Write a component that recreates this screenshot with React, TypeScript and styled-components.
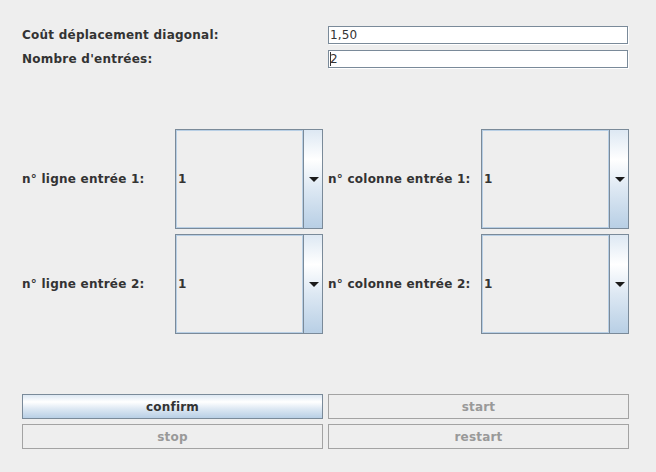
import React from "react";
import styled, { createGlobalStyle } from "styled-components";

const Global = createGlobalStyle`
  html, body { margin: 0; padding: 0; background: #eeeeee; }
  body { font-family: "DejaVu Sans", "Liberation Sans", sans-serif; }
`;

const ocean = "linear-gradient(to bottom, #dde8f3 0%, #ffffff 30%, #dde8f3 60%, #b8cfe5 100%)";

const Page = styled.div`
  width: 656px;
  height: 472px;
  box-sizing: border-box;
  padding: 26px 27px 0 22px;
  display: flex;
  flex-direction: column;
  background: #eeeeee;
  color: #333333;
  font-size: 12px;
`;

const FieldGrid = styled.div`
  display: grid;
  grid-template-columns: 306px 300px;
  row-gap: 6px;
  align-items: center;
`;

const Label = styled.label<{ $indent?: boolean }>`
  font-weight: bold;
  font-size: 12px;
  letter-spacing: 0.24px;
  color: #333333;
  white-space: nowrap;
  padding-left: ${(p) => (p.$indent ? "5px" : "0")};
`;

const TextField = styled.div`
  height: 18px;
  box-sizing: border-box;
  border: 1px solid #7a8a99;
  box-shadow: 1px 1px 0 #ffffff;
  background: #ffffff;
  display: flex;
  align-items: center;
  padding-left: 1px;
  font-size: 12px;
  letter-spacing: 0.1px;
  color: #333333;
`;

const Caret = styled.span`
  display: inline-block;
  width: 1px;
  height: 14px;
  background: #333333;
  margin-right: -1px;
`;

const ComboGrid = styled.div`
  margin-top: 61px;
  display: grid;
  grid-template-columns: 153px 148px 158px 148px;
  row-gap: 5px;
  align-items: center;
`;

const Combo = styled.div`
  height: 100px;
  box-sizing: border-box;
  border: 1px solid #7a8a99;
  display: flex;
`;

const ComboDisplay = styled.div`
  flex: 1;
  box-sizing: border-box;
  border: 1px solid #b8cfe5;
  background: #eeeeee;
  display: flex;
  align-items: center;
  padding-left: 1px;
  font-weight: bold;
  font-size: 12px;
  color: #333333;
`;

const ArrowButton = styled.div`
  width: 19px;
  box-sizing: border-box;
  border-left: 1px solid #7a8a99;
  background: ${ocean};
  display: flex;
  align-items: center;
  justify-content: center;
  padding-left: 1px;
`;

const ButtonGrid = styled.div`
  margin-top: 60px;
  display: grid;
  grid-template-columns: 301px 301px;
  column-gap: 5px;
  row-gap: 5px;
`;

const Button = styled.button<{ $enabled?: boolean }>`
  height: 25px;
  box-sizing: border-box;
  margin: 0;
  padding: 0;
  border: 1px solid ${(p) => (p.$enabled ? "#7a8a99" : "#a3a3a3")};
  background: ${(p) => (p.$enabled ? ocean : "#eeeeee")};
  color: ${(p) => (p.$enabled ? "#333333" : "#999999")};
  font-family: "DejaVu Sans", "Liberation Sans", sans-serif;
  font-weight: bold;
  font-size: 12px;
  letter-spacing: 0.2px;
  text-align: center;
`;

const Arrow = () => (
  <svg width="10" height="5" viewBox="0 0 10 5">
    <polygon points="0,0 10,0 5,5" fill="#1a1a1a" />
  </svg>
);

const ComboBox = ({ value }: { value: string }) => (
  <Combo>
    <ComboDisplay>{value}</ComboDisplay>
    <ArrowButton>
      <Arrow />
    </ArrowButton>
  </Combo>
);

export default function App() {
  return (
    <>
      <Global />
      <Page>
        <FieldGrid>
          <Label>Coût déplacement diagonal:</Label>
          <TextField>1,50</TextField>
          <Label>Nombre d'entrées:</Label>
          <TextField>
            <Caret />2
          </TextField>
        </FieldGrid>
        <ComboGrid>
          <Label>n° ligne entrée 1:</Label>
          <ComboBox value="1" />
          <Label $indent>n° colonne entrée 1:</Label>
          <ComboBox value="1" />
          <Label>n° ligne entrée 2:</Label>
          <ComboBox value="1" />
          <Label $indent>n° colonne entrée 2:</Label>
          <ComboBox value="1" />
        </ComboGrid>
        <ButtonGrid>
          <Button $enabled>confirm</Button>
          <Button disabled>start</Button>
          <Button disabled>stop</Button>
          <Button disabled>restart</Button>
        </ButtonGrid>
      </Page>
    </>
  );
}
